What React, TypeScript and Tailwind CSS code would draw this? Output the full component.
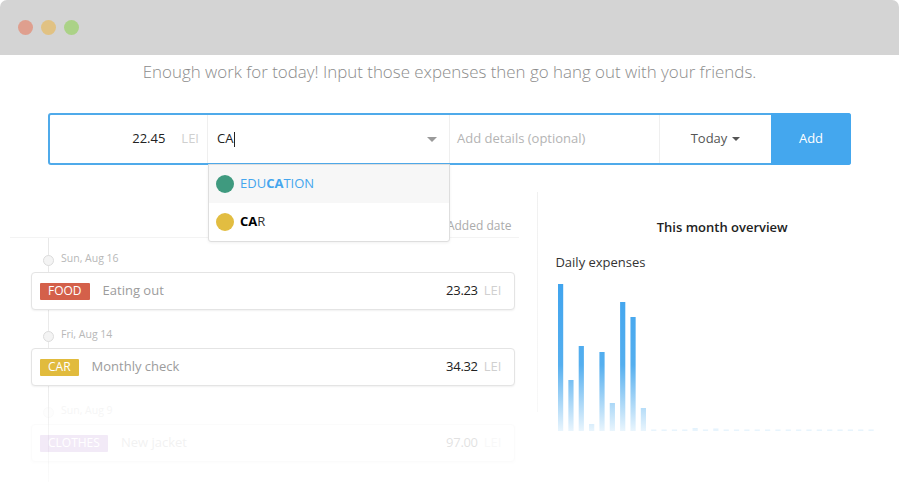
import React from "react";

const bars = [147, 51, 85, 7, 79, 28, 129, 114, 23, 1.5, 1.5, 1.5, 1.5, 3, 1.5, 2.5, 1.5, 1.5, 1.5, 1.5, 1.5, 1.5, 1.5, 1.5, 1.5, 1.5, 1.5, 1.5, 1.5, 1.5, 1.5];

const expenses = [
  { date: "Sun, Aug 16", tag: "FOOD", tagClass: "bg-[#d4604a]", text: "Eating out", amount: "23.23", faded: false },
  { date: "Fri, Aug 14", tag: "CAR", tagClass: "bg-[#e1bb3d]", text: "Monthly check", amount: "34.32", faded: false },
  { date: "Sun, Aug 9", tag: "CLOTHES", tagClass: "bg-[#a463c9]", text: "New jacket", amount: "97.00", faded: true },
];

const DailyChart = () => {
  const base = 147;
  return (
    <svg width="322" height="148" viewBox="0 0 322 148">
      <defs>
        <linearGradient id="barFade" gradientUnits="userSpaceOnUse" x1="0" y1="0" x2="0" y2={base}>
          <stop offset="0" stopColor="#40a4ee" />
          <stop offset="0.55" stopColor="#55afef" />
          <stop offset="1" stopColor="#e9f5fd" />
        </linearGradient>
      </defs>
      {bars.map((h, i) => (
        <rect key={i} x={3 + i * 10.35} y={base - h} width="5.2" height={h} fill="url(#barFade)" />
      ))}
    </svg>
  );
};

const App: React.FC = () => {
  return (
    <div
      className="w-[899px] h-[483px] bg-white overflow-hidden"
      style={{ fontFamily: '"Open Sans", "Liberation Sans", sans-serif' }}
    >
      {/* window bar */}
      <div className="h-[55px] bg-[#d4d4d4] rounded-t-[7px] flex items-center gap-[8px] pl-[18px]">
        <span className="w-[15px] h-[15px] rounded-full bg-[#df9f8e]" />
        <span className="w-[15px] h-[15px] rounded-full bg-[#e1c283]" />
        <span className="w-[15px] h-[15px] rounded-full bg-[#abd287]" />
      </div>

      <div className="h-[34px] flex items-center justify-center text-[16.9px] font-light text-[#8c8c8c]">
        Enough work for today! Input those expenses then go hang out with your friends.
      </div>

      {/* input form */}
      <div className="px-[48px] mt-[24px]">
        <div className="h-[52px] border-2 border-[#4faaea] rounded-[3px] flex text-[13px]">
          <div className="w-[158px] flex items-center justify-end gap-[16px] pr-[8px] border-r border-[#efefef]">
            <span className="text-[#222]">22.45</span>
            <span className="text-[#d0d0d0]">LEI</span>
          </div>
          <div className="relative w-[242px] flex items-center pl-[9px] pr-[12px] border-r border-[#efefef]">
            <span className="text-[#222]">CA</span>
            <span className="w-px h-[15px] bg-[#222] ml-[1px]" />
            <span className="ml-auto w-0 h-0 border-l-[5px] border-r-[5px] border-t-[5px] border-l-transparent border-r-transparent border-t-[#9a9a9a]" />
            {/* suggestions */}
            <div className="absolute left-0 top-[calc(100%+1px)] w-[242px] bg-white border border-[#dedede] rounded-b-[3px] shadow-[0_1px_3px_rgba(0,0,0,0.06)] z-10">
              <div className="h-[38px] bg-[#f7f7f7] flex items-center pl-[7px] gap-[6px]">
                <span className="w-[18px] h-[18px] rounded-full bg-[#3f9a7f]" />
                <span className="text-[#45a6ee]">
                  EDU<b className="font-bold">CA</b>TION
                </span>
              </div>
              <div className="h-[38px] flex items-center pl-[7px] gap-[6px]">
                <span className="w-[18px] h-[18px] rounded-full bg-[#e2bd41]" />
                <span className="text-[#333]">
                  <b className="font-bold text-black">CA</b>R
                </span>
              </div>
            </div>
          </div>
          <div className="flex-1 flex items-center pl-[7px] text-[#b4b4b4]">Add details (optional)</div>
          <div className="w-[112px] flex items-center justify-center gap-[5px] border-l border-[#efefef] text-[#555]">
            Today
            <span className="w-0 h-0 border-l-[4px] border-r-[4px] border-t-[4px] border-l-transparent border-r-transparent border-t-[#555]" />
          </div>
          <div className="w-[80px] -my-[2px] -mr-[2px] rounded-r-[3px] bg-[#44a7ee] flex items-center justify-center text-white">
            Add
          </div>
        </div>
      </div>

      {/* content */}
      <div className="flex px-[10px] gap-[18px]">
        <div className="w-[510px]">
          <div className="h-[73px] border-b border-[#f3f3f3] flex items-end justify-end pr-[8px] pb-[2px] text-[12px] text-[#ababab]">
            Added date
          </div>
          <div className="relative">
            <div className="absolute left-[38px] top-0 bottom-0 w-px bg-gradient-to-b from-[#e8e8e8] via-[#ececec] via-60% to-[#fbfbfb]" />
            {expenses.map((e, i) => (
              <div key={i} className={e.faded ? "relative opacity-[0.13]" : "relative"}>
                <div className={(i === 0 ? "h-[34px]" : "h-[38px]") + " flex items-end pb-[5px] pl-[33px] gap-[7px]"}>
                  <span className="w-[11px] h-[11px] rounded-full border border-[#dcdcdc] bg-[#f4f4f4] mb-[1px]" />
                  <span className="text-[10.5px] text-[#b8b8b8]">{e.date}</span>
                </div>
                <div className="ml-[21px] mr-[4px] h-[38px] bg-white border border-[#e4e4e4] rounded-[4px] shadow-[0_1px_2px_rgba(0,0,0,0.06)] flex items-center pl-[8px] pr-[13px] text-[13px]">
                  <span className={e.tagClass + " h-[17px] px-[8px] flex items-center text-[12px] text-white rounded-[1px]"}>
                    {e.tag}
                  </span>
                  <span className="ml-[13px] text-[#9c9c9c]">{e.text}</span>
                  <span className="ml-auto text-[#222] tracking-[-0.3px]">{e.amount}</span>
                  <span className="ml-[6px] text-[#d0d0d0]">LEI</span>
                </div>
              </div>
            ))}
            <div className="h-[20px]" />
          </div>
        </div>

        <div className="w-[352px] mt-[27px] flex">
          <div className="w-px h-[220px] bg-gradient-to-b from-[#f0f0f0] to-[#f8f8f8]" />
          <div className="flex-1 pl-[17px]">
            <div className="pt-[26px] text-center text-[13px] font-semibold text-[#222] leading-[18px]">
              This month overview
            </div>
            <div className="mt-[17px] text-[13px] text-[#333] leading-[18px]">Daily expenses</div>
            <div className="mt-[13px]">
              <DailyChart />
            </div>
          </div>
        </div>
      </div>
    </div>
  );
};

export default App;
